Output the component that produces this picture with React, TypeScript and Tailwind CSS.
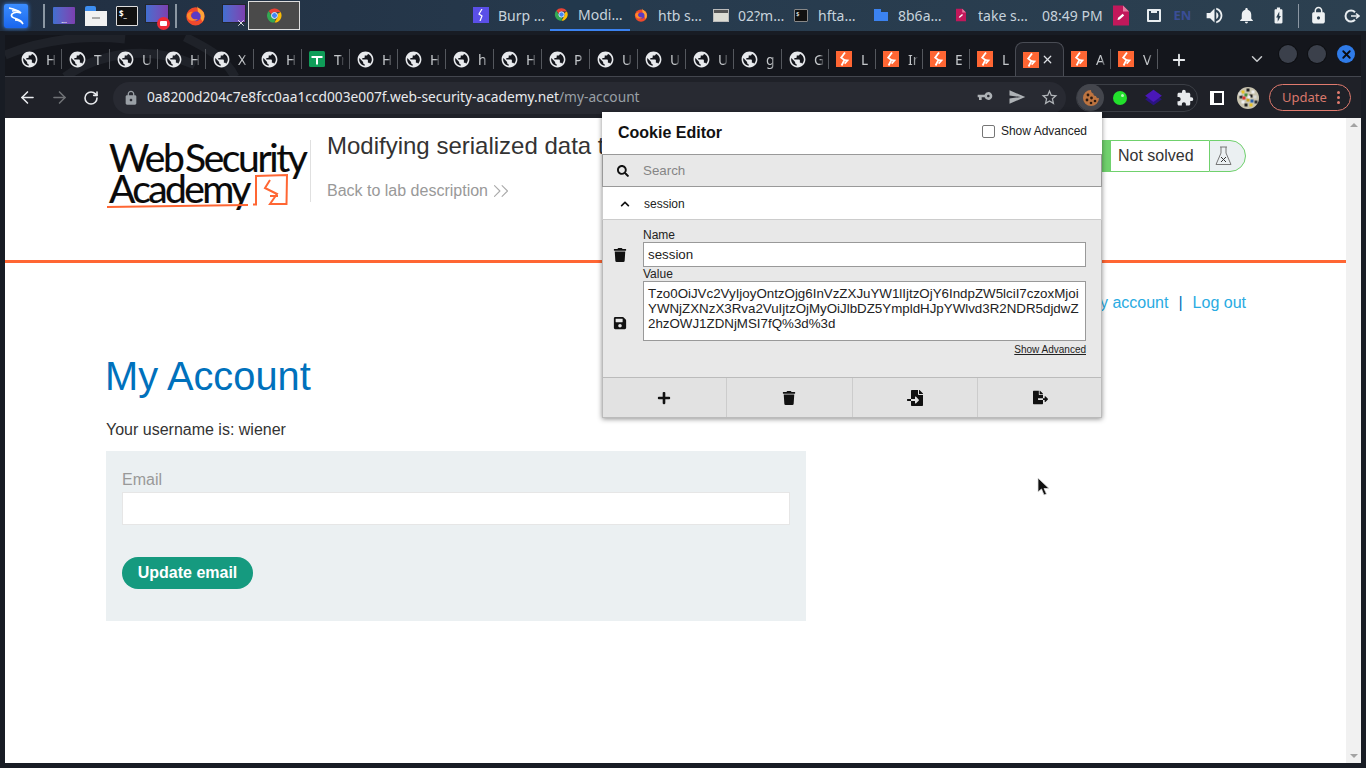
import { ArrowLeft, ArrowRight, RotateCw, ChevronDown, Plus, X, ChevronsRight } from 'lucide-react';
import {
  MdPublic,
  MdLock,
  MdVpnKey,
  MdSend,
  MdStarBorder,
  MdExtension,
  MdNotifications,
  MdVolumeUp,
  MdBatteryChargingFull,
} from 'react-icons/md';
import { FaSearch, FaChevronUp, FaTrash, FaSave, FaPlus, FaFileImport, FaFileExport } from 'react-icons/fa';

const uiFont = "font-['Noto_Sans',sans-serif]";

const tabs = [
  { icon: 'globe', label: 'H' },
  { icon: 'globe', label: 'T' },
  { icon: 'globe', label: 'U' },
  { icon: 'globe', label: 'H' },
  { icon: 'globe', label: 'X' },
  { icon: 'globe', label: 'H' },
  { icon: 'sheet', label: 'Tr' },
  { icon: 'globe', label: 'H' },
  { icon: 'globe', label: 'H' },
  { icon: 'globe', label: 'h' },
  { icon: 'globe', label: 'H' },
  { icon: 'globe', label: 'P' },
  { icon: 'globe', label: 'U' },
  { icon: 'globe', label: 'U' },
  { icon: 'globe', label: 'U' },
  { icon: 'globe', label: 'g', narrow: false },
  { icon: 'globe', label: 'G', narrow: true },
  { icon: 'bolt', label: 'L', narrow: true },
  { icon: 'bolt', label: 'In', narrow: true },
  { icon: 'bolt', label: 'E', narrow: true },
  { icon: 'bolt', label: 'L', narrow: true, noSep: true },
  { icon: 'bolt', label: '', narrow: true, active: true },
  { icon: 'bolt', label: 'A', narrow: true },
  { icon: 'bolt', label: 'V', narrow: true },
];

const BoltIcon = ({ size = 16 }: { size?: number }) => (
  <svg width={size} height={size} viewBox="0 0 16 16" className="shrink-0">
    <rect width="16" height="16" fill="#ff6633" />
    <path d="M9 1.500 5.200 6.600 8.400 9 5.600 14.500" fill="none" stroke="#fff" strokeWidth="1.800" />
    <path d="M8.400 9 11.600 9.400 8.600 12.600" fill="none" stroke="#fff" strokeWidth="1.600" />
  </svg>
);

const SheetIcon = () => (
  <svg width="16" height="16" viewBox="0 0 16 16" className="shrink-0">
    <rect width="16" height="16" rx="1.500" fill="#0f9d58" />
    <path d="M2.500 5h11v2h-11zM7 5h2v8.500H7z" fill="#fff" />
  </svg>
);

const ChromeIcon = ({ size = 16 }: { size?: number }) => (
  <svg width={size} height={size} viewBox="0 0 48 48" className="shrink-0">
    <path d="M24 4a20 20 0 0 1 17.300 10H24a10 10 0 0 0-9.400 6.600L7.600 11.200A20 20 0 0 1 24 4z" fill="#ea4335" />
    <path d="M41.300 14A20 20 0 0 1 24 44l8.600-15A10 10 0 0 0 32.700 19l8.600-5z" fill="#fbbc05" />
    <path d="M24 44A20 20 0 0 1 7.600 11.200l8.600 15A10 10 0 0 0 26 33.800L24 44z" fill="#34a853" />
    <circle cx="24" cy="24" r="8.500" fill="#4285f4" stroke="#fff" strokeWidth="2.500" />
  </svg>
);

const FirefoxIcon = ({ size = 20 }: { size?: number }) => (
  <svg width={size} height={size} viewBox="0 0 24 24" className="shrink-0">
    <circle cx="12" cy="13" r="10.500" fill="#f0492c" />
    <path d="M14 1c1 3 5 4 7 7 2 4 1 8-1 11l-5-9z" fill="#ffa436" />
    <circle cx="12.500" cy="13" r="5.500" fill="#5b3bc4" />
    <path d="M2 11c2-3 5-4 7-3-2 1-3 3-2 5 1 3 5 4 8 3-3 3-9 3-12-1z" fill="#ff8a2b" />
  </svg>
);

const MonitorIcon = ({ badge }: { badge?: 'rec' | 'cut' }) => (
  <div className="relative h-[22px] w-[22px] shrink-0">
    <div className="h-[17px] w-[22px] bg-gradient-to-r from-[#3f6fd0] to-[#7b3fb0] ring-1 ring-[#22262e]" />
    {badge === 'rec' && (
      <div className="absolute -bottom-[3px] -right-[2px] flex h-[13px] w-[13px] items-center justify-center rounded-full bg-[#ee2a36]">
        <div className="h-[5px] w-[7px] rounded-[1px] bg-white" />
      </div>
    )}
    {badge === 'cut' && <X size={10} strokeWidth={2} className="absolute -bottom-[1px] left-[13px] text-white" />}
  </div>
);

const RedDoc = ({ w, h }: { w: number; h: number }) => (
  <svg width={w} height={h} viewBox="0 0 16 20" className="shrink-0">
    <path d="M0 0h10l6 6v14H0z" fill="#c2185b" />
    <path d="M10 0l6 6h-6z" fill="#e57ba0" />
    <path d="M4.500 14.500l.6-2.200 4.600-4 1.500 1.600-4.600 4z" fill="#fff" />
  </svg>
);

const TaskItem = ({ icon, label, active }: { icon: React.ReactNode; label: string; active?: boolean }) => (
  <div className={`flex h-[31px] w-[80px] items-center pb-[1px] ${active ? 'border-b-[2px] border-[#3b82f0] bg-[#22384c]' : ''}`}>
    <div className="flex w-[28px] shrink-0 justify-center pr-[6px]">{icon}</div>
    <span className="whitespace-nowrap text-[14px] text-[#c7d3dc]">{label}</span>
  </div>
);

const BrowserTab = ({
  icon,
  label,
  active,
  narrow,
  noSep,
}: {
  icon: string;
  label: string;
  active?: boolean;
  narrow?: boolean;
  noSep?: boolean;
}) => (
  <div
    className={`relative flex h-[34px] shrink-0 items-center ${
      active
        ? 'z-10 -ml-[2px] w-[49px] rounded-t-[8px] border border-b-0 border-[#494c54] bg-[#1f2128] pl-[7px]'
        : narrow
          ? 'w-[47px] pl-[7px]'
          : 'w-[48px] pl-[7px]'
    }`}
  >
    <div className="flex w-[16px] shrink-0 justify-center">
      {icon === 'globe' && <MdPublic size={19} className="-mx-[2px] shrink-0 text-[#e8eaed]" />}
      {icon === 'sheet' && <SheetIcon />}
      {icon === 'bolt' && <BoltIcon />}
    </div>
    {active ? (
      <X size={13} strokeWidth={2.2} className="ml-[2px] shrink-0 text-[#dfe1e5]" />
    ) : (
      <>
        <span className="ml-[9px] w-[10px] overflow-hidden whitespace-nowrap text-[14px] text-[#c4c7ca] [mask-image:linear-gradient(to_right,#000_55%,transparent)]">
          {label}
        </span>
        {!noSep && <div className="absolute right-0 top-[7px] h-[20px] w-px bg-[#54575d]" />}
      </>
    )}
  </div>
);

const avatarDots = [
  [6, 5, '#e6c229'], [11, 3, '#222'], [16, 5, '#eee'], [4, 10, '#333'], [9, 8, '#4b8f3a'], [14, 9, '#222'],
  [18, 10, '#d9d9d9'], [6, 15, '#eee'], [11, 13, '#c9a227'], [15, 14, '#2b5fa8'], [9, 18, '#222'], [14, 18, '#e6c229'],
  [3, 7, '#ddd'], [19, 15, '#333'], [12, 10, '#eee'], [7, 11, '#d33'],
] as const;

const LogoMark = () => (
  <div className="relative h-[72px] w-[204px] font-['Lato',sans-serif] text-[#0a0a0a] [-webkit-text-stroke:0.2px_#0a0a0a]">
    <div className="absolute left-[3px] top-[2px] whitespace-nowrap text-[39px] leading-[30px] tracking-[-2.4px] [word-spacing:-5px]">Web Security</div>
    <div className="absolute left-[3px] top-[33px] whitespace-nowrap text-[39px] leading-[30px] tracking-[-2.6px]">Academy</div>
    <svg width="204" height="72" viewBox="0 0 204 72" className="absolute left-0 top-0" fill="none">
      <path d="M1 67 142 65" stroke="#ff6633" strokeWidth="2.200" />
      <path d="M147 64.500H150L150 36 181 35 180.500 64H164L171 54 159 48 164 40" stroke="#ff6633" strokeWidth="2" />
      <path d="M164 56H172" stroke="#ff6633" strokeWidth="2" />
    </svg>
  </div>
);

const CookiePopup = () => (
  <div className="absolute left-[602px] top-[112px] z-20 w-[500px] bg-white font-['Liberation_Sans',sans-serif] text-[#222] shadow-[0_1px_5px_rgba(0,0,0,0.45)]">
    <div className="flex h-[42px] items-center pl-[16px] pr-[15px]">
      <span className="text-[16px] font-bold text-[#111]">Cookie Editor</span>
      <div className="-mt-[4px] ml-auto flex items-center">
        <div className="h-[13px] w-[13px] rounded-[2px] border border-[#767676] bg-white" />
        <span className="ml-[6px] text-[12px]">Show Advanced</span>
      </div>
    </div>
    <div className="flex h-[33px] items-center border border-[#999] bg-[#e8e8e8] pl-[14px]">
      <FaSearch size={12} className="text-[#111]" />
      <span className="ml-[14px] text-[13.333px] text-[#858585]">Search</span>
    </div>
    <div className="flex h-[33px] items-center border-x border-b border-[#ccc] bg-white pl-[17px] pt-[1px]">
      <FaChevronUp size={10} className="text-[#111]" />
      <span className="ml-[14px] text-[12px]">session</span>
    </div>
    <div className="grid h-[157px] grid-cols-[40px_443px] content-start border-x border-[#bbb] bg-[#e8e8e8] pt-[8px] text-[12px] leading-[14px]">
      <div />
      <div>Name</div>
      <div className="flex items-center justify-center pr-[6px] pt-[1px]">
        <FaTrash size={14} className="text-[#111]" />
      </div>
      <div className="flex h-[25px] items-center border border-[#999] bg-white pl-[4px] text-[13.333px]">session</div>
      <div />
      <div className="h-[14px]">Value</div>
      <div className="flex items-end justify-center pb-[11px] pr-[6px]">
        <FaSave size={14} className="text-[#111]" />
      </div>
      <div className="h-[60px] break-all border border-[#999] bg-white py-[4px] pl-[4px] pr-[4px] text-[13.333px] leading-[15px]">
        Tzo0OiJVc2VyIjoyOntzOjg6InVzZXJuYW1lIjtzOjY6IndpZW5lciI7czoxMjoiYWNjZXNzX3Rva2VuIjtzOjMyOiJlbDZ5YmpldHJpYWlvd3R2NDR5djdwZ2hzOWJ1ZDNjMSI7fQ%3d%3d
      </div>
      <div />
      <div className="mt-[3px] text-right text-[10px] leading-[12px] underline">Show Advanced</div>
    </div>
    <div className="grid h-[41px] grid-cols-[124px_126px_125px_123px] border border-[#bbb] bg-[#e2e2e2] text-[#111]">
      <div className="flex items-center justify-center border-r border-[#ccc] pr-[2px]"><FaPlus size={14} /></div>
      <div className="flex items-center justify-center border-r border-[#ccc] pr-[2px]"><FaTrash size={14} /></div>
      <div className="flex items-center justify-center border-r border-[#ccc]"><FaFileImport size={16} /></div>
      <div className="flex items-center justify-center pl-[2px]"><FaFileExport size={15} /></div>
    </div>
  </div>
);

export default function App() {
  return (
    <div className={`relative flex h-[768px] w-[1366px] flex-col overflow-hidden bg-[#181c24] ${uiFont}`}>
      {/* desktop panel */}
      <div className="flex h-[31px] shrink-0 items-center bg-gradient-to-r from-[#212f42] via-[#273b4e] to-[#2c4050]">
        <div className="ml-[4px] flex h-[24px] w-[24px] items-center justify-center rounded-[2px] bg-gradient-to-b from-[#3b8dff] to-[#1a66ee] shadow-[0_0_4px_#3b8dff]">
          <svg width="20" height="20" viewBox="0 0 20 20" fill="none" stroke="#fff" strokeWidth="1.600">
            <path d="M3 2c5 1 9 2 12 5-3-1-7-1-9 1-2 3 2 4 5 5 3 1 5 3 6 5-2-3-5-4-8-4" />
            <path d="M6 5c3-.5 6 0 8 1" />
          </svg>
        </div>
        <div className="ml-[15px] h-[24px] w-[2px] bg-[#8b97a3]" />
        <div className="ml-[8px] flex h-[17px] w-[22px] items-end justify-center rounded-[1px] bg-gradient-to-r from-[#3f6fd0] to-[#7b3fb0] text-[7px] leading-[7px] text-white">...</div>
        <div className="ml-[10px] flex h-[20px] w-[22px] flex-col">
          <div className="h-[5px] w-[11px] rounded-t-[2px] bg-[#3d8ef0]" />
          <div className="flex h-[15px] items-center justify-center bg-[#f1f1f1]"><div className="h-[2px] w-[8px] bg-[#aaa]" /></div>
        </div>
        <div className="ml-[9px] h-[20px] w-[22px] rounded-[1px] border border-[#ddd] bg-[#111] pl-[2px] text-[8px] font-bold leading-[14px] text-white">$_</div>
        <div className="ml-[8px]"><MonitorIcon badge="rec" /></div>
        <div className="ml-[7px] h-[24px] w-[2px] bg-[#8b97a3]" />
        <div className="ml-[8px]"><FirefoxIcon size={21} /></div>
        <div className="ml-[17px]"><MonitorIcon badge="cut" /></div>
        <div className="ml-[3px] flex h-[29px] w-[52px] items-center justify-center border border-[#ddd] bg-[#4a4a4a]">
          <ChromeIcon size={17} />
        </div>
        <div className="ml-[170px] flex">
          <TaskItem
            label="Burp …"
            icon={
              <div className="flex h-[16px] w-[16px] items-center justify-center bg-[#5a4fe8] text-[10px] font-bold text-white">
                <svg width="8" height="12" viewBox="0 0 8 12" fill="none" stroke="#fff" strokeWidth="1.200"><path d="M5 0 2 5l3 2-2 5" /></svg>
              </div>
            }
          />
          <TaskItem label="Modi…" active icon={<ChromeIcon size={15} />} />
          <TaskItem label="htb s…" icon={<FirefoxIcon size={14} />} />
          <TaskItem label="02?m…" icon={<div className="h-[11px] w-[14px] border-t-[3px] border-[#555] bg-[#dcdcd4] ring-1 ring-[#bbb]" />} />
          <TaskItem label="hfta…" icon={<div className="h-[13px] w-[14px] rounded-[1px] border border-[#888] bg-[#111] pl-[1px] text-[6px] leading-[8px] text-white">$</div>} />
          <TaskItem
            label="8b6a…"
            icon={
              <div className="flex h-[12px] w-[14px] flex-col">
                <div className="h-[3px] w-[7px] bg-[#3b82f0]" />
                <div className="h-[9px] bg-[#3b82f0]" />
              </div>
            }
          />
          <TaskItem label="take s…" icon={<RedDoc w={10} h={14} />} />
        </div>
        <span className="ml-[12px] whitespace-nowrap text-[14px] text-[#c7d3dc]">08:49 PM</span>
        <div className="ml-[10px]"><RedDoc w={16} h={21} /></div>
        <div className="ml-[18px] flex h-[13px] w-[14px] items-start justify-center rounded-[1px] border-[2px] border-[#e8edf0]">
          <div className="h-[2px] w-[6px] bg-[#e8edf0]" />
        </div>
        <span className="ml-[13px] text-[13px] font-bold text-[#3a4e96]">EN</span>
        <MdVolumeUp size={21} className="ml-[13px] text-[#eef1f3]" />
        <MdNotifications size={19} className="ml-[12px] text-[#eef1f3]" />
        <MdBatteryChargingFull size={19} className="ml-[13px] text-[#eef1f3]" />
        <div className="ml-[10px] h-[24px] w-px bg-[#8b97a3]" />
        <MdLock size={19} className="ml-[10px] text-[#eef1f3]" />
        <svg width="16" height="16" viewBox="0 0 16 16" fill="none" stroke="#e8edf0" strokeWidth="2" className="ml-[16px]">
          <path d="M11 4.200A5.500 5.500 0 1 0 11 11.800" />
          <path d="M7 8h8M12 5.500 15 8l-3 2.500" strokeWidth="1.600" />
        </svg>
      </div>

      {/* browser window */}
      <div className="mb-[5px] ml-[5px] mr-[5px] mt-[4px] flex min-h-0 flex-1 flex-col">
        <div className="relative flex h-[42px] shrink-0 items-end overflow-hidden border-b border-[#43464e] bg-[#14161c] pl-[9px]">
          <svg width="420" height="42" viewBox="0 0 420 42" fill="none" stroke="#1f2229" strokeWidth="9" className="absolute left-0 top-0">
            <path d="M0 20C40 4 80 0 120 4M60 42C90 20 140 8 190 30M180 2c20 10 40 20 50 40" />
          </svg>
          <div className="relative flex w-[1143px] items-center">
            {tabs.map((t, i) => (
              <BrowserTab key={i} icon={t.icon} label={t.label} active={t.active} narrow={t.narrow} noSep={t.noSep} />
            ))}
          </div>
          <div className="relative mb-[7px] ml-[12px] flex w-[20px] justify-center text-[#e8eaed]">
            <Plus size={18} strokeWidth={2.4} />
          </div>
          <div className="relative mb-[8px] ml-[59px] text-[#c8cacd]">
            <ChevronDown size={18} strokeWidth={2} />
          </div>
          <div className="relative mb-[13px] ml-[13px] flex items-center gap-[11px]">
            <div className="h-[18px] w-[18px] rounded-full bg-[#3b404b] ring-1 ring-[#0e0f13]" />
            <div className="h-[18px] w-[18px] rounded-full bg-[#3b404b] ring-1 ring-[#0e0f13]" />
            <div className="flex h-[18px] w-[18px] items-center justify-center rounded-full bg-[#2f7be8]">
              <X size={13} strokeWidth={3.4} className="text-[#0b0d12]" />
            </div>
          </div>
        </div>

        <div className="flex h-[41px] shrink-0 items-center bg-[#1f2128] pl-[6px]">
          <div className="flex w-[32px] justify-center text-[#e8eaed]"><ArrowLeft size={19} strokeWidth={2} /></div>
          <div className="flex w-[32px] justify-center text-[#6f7276]"><ArrowRight size={19} strokeWidth={2} /></div>
          <div className="flex w-[32px] justify-center text-[#e8eaed]"><RotateCw size={16} strokeWidth={2.4} /></div>
          <div className="ml-[6px] flex h-[32px] w-[953px] items-center rounded-full bg-[#282a32] pl-[10px]">
            <MdLock size={16} className="text-[#9aa0a6]" />
            <span className="ml-[8px] whitespace-nowrap text-[13.75px] text-[#e8eaed]">
              0a8200d204c7e8fcc0aa1ccd003e007f.web-security-academy.net
              <span className="text-[#9aa0a6]">/my-account</span>
            </span>
            <div className="ml-auto flex pr-[1px] text-[#aeb2b6]">
              <div className="flex w-[32px] justify-center"><MdVpnKey size={16} className="-scale-x-100" /></div>
              <div className="flex w-[32px] justify-center"><MdSend size={18} /></div>
              <div className="flex w-[32px] justify-center"><MdStarBorder size={19} /></div>
            </div>
          </div>
          <div className="ml-[10px] flex h-[28px] w-[122px] items-center rounded-full border border-[#3c3f46]">
            <div className="flex h-[27px] w-[27px] shrink-0 items-center justify-center rounded-full bg-[#44464d]">
              <svg width="18" height="18" viewBox="0 0 18 18">
                <path d="M9 1a8 8 0 1 0 8 8c-1.500.5-3-.5-3-2-1.500.3-3-1-2.500-2.500C10 4.500 9 3 9 1z" fill="#bd7440" />
                <circle cx="6" cy="6" r="1.400" fill="#2b1a10" />
                <circle cx="5" cy="11" r="1.400" fill="#2b1a10" />
                <circle cx="9.500" cy="9" r="1.400" fill="#2b1a10" />
                <circle cx="9" cy="14" r="1.300" fill="#2b1a10" />
                <circle cx="13" cy="12" r="1.300" fill="#2b1a10" />
              </svg>
            </div>
            <div className="ml-[9px] flex h-[14px] w-[14px] shrink-0 items-center justify-center rounded-full bg-[#22e02c]">
              <div className="mb-[5px] ml-[4px] h-[3px] w-[3px] rounded-full bg-[#b8f5ba]" />
            </div>
            <svg width="19" height="19" viewBox="0 0 17 17" className="ml-[17px] shrink-0">
              <path d="M8.500 5 16 10l-7.500 5.500L1 10z" fill="#2a1480" />
              <path d="M8.500 1.500 16 7l-7.500 5.500L1 7z" fill="#4a17b8" />
            </svg>
            <MdExtension size={18} className="ml-[13px] shrink-0 text-[#e8eaed]" />
          </div>
          <div className="ml-[3px] flex w-[32px] justify-center">
            <div className="flex h-[14px] w-[14px] justify-end border-[2px] border-white bg-white">
              <div className="h-full w-[8px] bg-[#1f2128]" />
            </div>
          </div>
          <svg width="22" height="22" viewBox="0 0 22 22" className="ml-[4px]">
            <circle cx="11" cy="11" r="11" fill="#c9c4b0" />
            {avatarDots.map(([x, y, c], i) => (
              <rect key={i} x={x - 1.5} y={y - 1.5} width="3" height="3" fill={c} />
            ))}
          </svg>
          <div className="ml-[10px] flex h-[27px] w-[82px] items-center rounded-full border border-[#e07a6e] pl-[12px] text-[13px] text-[#d9786c]">
            Update
            <div className="ml-auto mr-[10px] flex flex-col gap-[2px]">
              <div className="h-[3px] w-[3px] rounded-full bg-[#e07a6e]" />
              <div className="h-[3px] w-[3px] rounded-full bg-[#e07a6e]" />
              <div className="h-[3px] w-[3px] rounded-full bg-[#e07a6e]" />
            </div>
          </div>
        </div>

        {/* page */}
        <div className="flex min-h-0 flex-1 bg-white font-['Liberation_Sans',sans-serif] text-[16px] text-[#333]">
          <div className="min-w-0 flex-1">
            <div className="flex h-[145px] items-start border-b-[3px] border-[#ff6633] pl-[101px] pr-[100px] pt-[13px]">
              <div className="mt-[9px] flex h-[62px] w-[205px] border-r border-[#e0e0e0]">
                <LogoMark />
              </div>
              <div className="ml-[16px] mt-[1px] w-[275px]">
                <div className="overflow-hidden whitespace-nowrap text-[24px] leading-[28px] text-[#333]">Modifying serialized data types</div>
                <div className="mt-[21px] flex items-center leading-[20px] text-[#999]">
                  Back to lab description
                  <ChevronsRight size={26} strokeWidth={1} className="-my-[3px] text-[#aaa]" />
                </div>
              </div>
              <div className="ml-auto mt-[9px] flex h-[32px]">
                <div className="w-[20px] bg-[#70d16d]" />
                <div className="flex w-[98px] items-center border-y border-[#70d16d] pl-[7px]">Not solved</div>
                <div className="flex w-[37px] items-center rounded-r-full border border-[#70d16d] bg-[#ebf0f2] pl-[5px]">
                  <svg width="17" height="20" viewBox="0 0 17 20" fill="none" stroke="#777" strokeWidth="1">
                    <path d="M5 1h7M6 1v6L1 18.500h15L11 7V1" />
                    <path d="M6 11l5 5M11 11l-5 5" stroke="#333" />
                  </svg>
                </div>
              </div>
            </div>
            <div className="pl-[101px] pr-[100px]">
              <div className="mt-[30px] text-right leading-[20px] text-[#29abe2]">
                My account<span className="mx-[10px] text-[#0071bc]">|</span>Log out
              </div>
              <h1 className="-ml-[1px] mt-[40px] text-[39.8px] leading-[46px] text-[#0071bc]">My Account</h1>
              <p className="mt-[21px] leading-[20px]">Your username is: wiener</p>
              <div className="mt-[11px] h-[170px] w-[700px] bg-[#ebf0f2] px-[16px] pt-[19px]">
                <div className="leading-[20px] text-[#999]">Email</div>
                <div className="mt-[2px] h-[33px] border border-[#e6e6e6] bg-white" />
                <div className="mt-[32px] flex h-[32px] w-[131px] items-center justify-center rounded-full bg-[#159a7f] font-bold text-white">
                  Update email
                </div>
              </div>
            </div>
          </div>
          <div className="flex w-[15px] shrink-0 flex-col items-center justify-between bg-[#f1f1f1] py-[5px]">
            <div className="h-0 w-0 border-x-[4px] border-b-[4px] border-x-transparent border-b-[#a3a3a3]" />
            <div className="h-0 w-0 border-x-[4px] border-t-[4px] border-x-transparent border-t-[#a3a3a3]" />
          </div>
        </div>
      </div>

      <CookiePopup />

      {/* mouse pointer */}
      <svg width="14" height="20" viewBox="0 0 14 20" className="absolute left-[1037px] top-[477px] z-30">
        <path d="M1 1v14l3.500-3 2.500 6 2.500-1-2.500-5.500H12z" fill="#111" stroke="#ddd" strokeWidth="0.8" />
      </svg>
    </div>
  );
}
